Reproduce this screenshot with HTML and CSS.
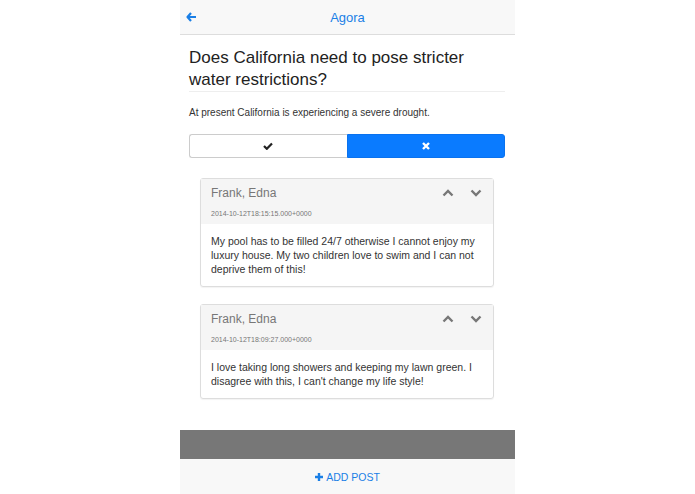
FILE: index.html
```html
<!DOCTYPE html>
<html lang="en">
<head>
    <meta charset="UTF-8">
    <meta name="viewport" content="width=device-width, initial-scale=1.0">
    <title>Agora</title>
    <link rel="stylesheet" href="styles.css">
</head>
<body>
    <div class="app">
        <header class="navbar">
            <a class="back" href="#">
                <svg width="11" height="10" viewBox="0 0 11 10"><path d="M5 1 L1.5 5 L5 9 M1.5 5 H10" fill="none" stroke="#1a7fe6" stroke-width="2.2" stroke-linejoin="round"/></svg>
            </a>
            <span class="brand">Agora</span>
        </header>

        <main class="content">
            <h1>Does California need to pose stricter water restrictions?</h1>
            <p class="lead">At present California is experiencing a severe drought.</p>

            <div class="vote">
                <button class="vote-btn yes">
                    <svg width="10" height="8" viewBox="0 0 10 8"><path d="M1 4 L3.8 6.8 L9 1.4" fill="none" stroke="#222" stroke-width="2.2"/></svg>
                </button>
                <button class="vote-btn no">
                    <svg width="8" height="8" viewBox="0 0 8 8"><path d="M1 1 L7 7 M7 1 L1 7" fill="none" stroke="#fff" stroke-width="2.4"/></svg>
                </button>
            </div>

            <div class="posts">
                <div class="card">
                    <div class="card-head">
                        <div>
                            <div class="author">Frank, Edna</div>
                            <div class="date">2014-10-12T18:15:15.000+0000</div>
                        </div>
                        <div class="arrows">
                            <svg width="12" height="8" viewBox="0 0 12 8"><path d="M1.5 6.5 L6 2 L10.5 6.5" fill="none" stroke="#777" stroke-width="2.4"/></svg>
                            <svg width="12" height="8" viewBox="0 0 12 8"><path d="M1.5 1.5 L6 6 L10.5 1.5" fill="none" stroke="#777" stroke-width="2.4"/></svg>
                        </div>
                    </div>
                    <div class="card-body">My pool has to be filled 24/7 otherwise I cannot enjoy my luxury house. My two children love to swim and I can not deprive them of this!</div>
                </div>

                <div class="card">
                    <div class="card-head">
                        <div>
                            <div class="author">Frank, Edna</div>
                            <div class="date">2014-10-12T18:09:27.000+0000</div>
                        </div>
                        <div class="arrows">
                            <svg width="12" height="8" viewBox="0 0 12 8"><path d="M1.5 6.5 L6 2 L10.5 6.5" fill="none" stroke="#777" stroke-width="2.4"/></svg>
                            <svg width="12" height="8" viewBox="0 0 12 8"><path d="M1.5 1.5 L6 6 L10.5 1.5" fill="none" stroke="#777" stroke-width="2.4"/></svg>
                        </div>
                    </div>
                    <div class="card-body">I love taking long showers and keeping my lawn green. I disagree with this, I can't change my life style!</div>
                </div>
            </div>
        </main>

        <div class="shade"></div>
        <footer class="bottombar">
            <a href="#" class="add">
                <svg width="8" height="8" viewBox="0 0 8 8"><path d="M4 0 V8 M0 4 H8" stroke="#1a7fe6" stroke-width="2.4"/></svg>
                ADD POST
            </a>
        </footer>
    </div>
</body>
</html>
```

FILE: styles.css
```css
body {
    margin: 0;
    font-family: "Liberation Sans", Arial, sans-serif;
    color: #333;
    background: #fff;
}
.app {
    width: 335px;
    margin: 0 auto;
    height: 494px;
    display: flex;
    flex-direction: column;
}
.navbar {
    height: 34px;
    background: #f8f8f8;
    border-bottom: 1px solid #ddd;
    display: flex;
    align-items: center;
    justify-content: center;
    position: relative;
}
.back {
    position: absolute;
    left: 6px;
    top: 12px;
    display: flex;
}
.brand {
    color: #1a7fe6;
    font-size: 13px;
}
.content {
    flex: 1;
    padding: 0 10px 0 9px;
}
h1 {
    font-size: 17px;
    font-weight: normal;
    line-height: 22px;
    margin: 12px 0 0;
    padding-bottom: 0;
    border-bottom: 1px solid #eee;
    color: #222;
}
.lead {
    font-size: 10px;
    line-height: 16px;
    margin: 13px 0 13px;
}
.vote {
    display: flex;
}
.vote-btn {
    flex: 1;
    height: 24px;
    display: flex;
    align-items: center;
    justify-content: center;
    padding: 0;
    cursor: pointer;
}
.yes {
    background: #fff;
    border: 1px solid #ccc;
    border-right: none;
    border-radius: 3px 0 0 3px;
}
.no {
    background: #0a7bff;
    border: 1px solid #0a72ee;
    border-radius: 0 3px 3px 0;
}
.posts {
    margin: 20px 11px 0;
    display: flex;
    flex-direction: column;
    gap: 17px;
}
.card {
    border: 1px solid #ddd;
    border-radius: 3px;
    box-shadow: 0 1px 1px rgba(0, 0, 0, 0.05);
}
.card-head {
    background: #f5f5f5;
    height: 45px;
    padding: 0 10px;
    display: flex;
    justify-content: space-between;
    align-items: flex-start;
}
.author {
    font-size: 12px;
    color: #777;
    margin-top: 7px;
    line-height: 15px;
}
.date {
    font-size: 7px;
    color: #777;
    margin-top: 9px;
}
.arrows {
    display: flex;
    gap: 16px;
    margin-top: 10px;
    margin-right: 1px;
}
.card-body {
    padding: 10px 16px 10px 10px;
    font-size: 10.5px;
    line-height: 14px;
    color: #333;
}
.shade {
    height: 29px;
    background: #777;
}
.bottombar {
    height: 35px;
    background: #f8f8f8;
    display: flex;
    align-items: center;
    justify-content: center;
}
.add {
    color: #1a7fe6;
    font-size: 10.5px;
    text-decoration: none;
    display: flex;
    align-items: center;
    gap: 3px;
}
```
